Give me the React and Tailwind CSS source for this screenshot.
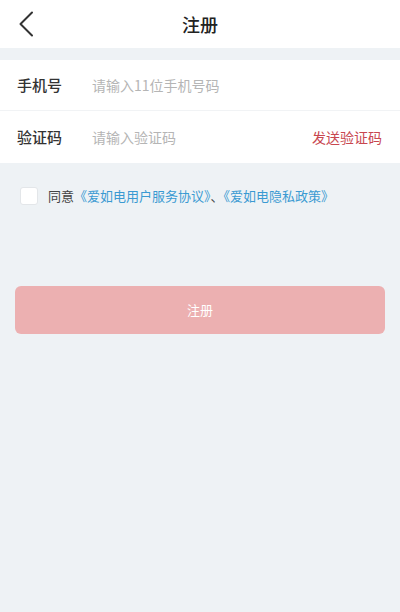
import React, { useState } from 'react';

const FONT = { fontFamily: '"Noto Sans CJK SC", "Noto Sans", sans-serif' };

export default function App() {
  const [phone, setPhone] = useState('');
  const [code, setCode] = useState('');
  const [agree, setAgree] = useState(false);

  return (
    <div className="w-[400px] h-[612px] bg-[#eef2f5] flex flex-col" style={FONT}>
      {/* header */}
      <div className="h-[48px] bg-white relative flex items-center justify-center">
        <button className="absolute left-[14px] top-[10px] w-[24px] h-[28px] flex items-center justify-center">
          <svg width="16" height="26" viewBox="0 0 16 26" fill="none">
            <path d="M14 1.5L2.5 13L14 24.5" stroke="#333" strokeWidth="2" strokeLinecap="round" strokeLinejoin="round" />
          </svg>
        </button>
        <span className="text-[18px] text-[#222] font-medium">注册</span>
      </div>

      <div className="h-[12px]" />

      {/* form */}
      <div className="bg-white">
        <div className="h-[51px] flex items-center pl-[17px] pr-[18px] border-b border-[#f1f3f5]">
          <span className="w-[75px] text-[15px] text-[#333] font-medium">手机号</span>
          <input
            value={phone}
            onChange={e => setPhone(e.target.value)}
            placeholder="请输入11位手机号码"
            className="flex-1 text-[14px] text-[#333] placeholder-[#b5b5b5] outline-none bg-transparent"
          />
        </div>
        <div className="h-[52px] flex items-center pl-[17px] pr-[18px]">
          <span className="w-[75px] text-[15px] text-[#333] font-medium">验证码</span>
          <input
            value={code}
            onChange={e => setCode(e.target.value)}
            placeholder="请输入验证码"
            className="flex-1 min-w-0 text-[14px] text-[#333] placeholder-[#b5b5b5] outline-none bg-transparent"
          />
          <span className="text-[14px] text-[#c8474f]">发送验证码</span>
        </div>
      </div>

      {/* agreement */}
      <div className="flex items-center pl-[20px] mt-[23px]">
        <button
          onClick={() => setAgree(!agree)}
          className="w-[18px] h-[18px] bg-white rounded-[3px] border border-[#e3e6e9]"
        />
        <span className="ml-[10px] text-[13px] text-[#444]">
          同意<span className="text-[#3a9ad2]">《爱如电用户服务协议》</span>、<span className="text-[#3a9ad2]">《爱如电隐私政策》</span>
        </span>
      </div>

      {/* submit */}
      <div className="px-[15px] mt-[80px]">
        <button className="w-full h-[48px] rounded-[6px] bg-[#ecb0b1] text-white text-[13px]">
          注册
        </button>
      </div>
    </div>
  );
}
